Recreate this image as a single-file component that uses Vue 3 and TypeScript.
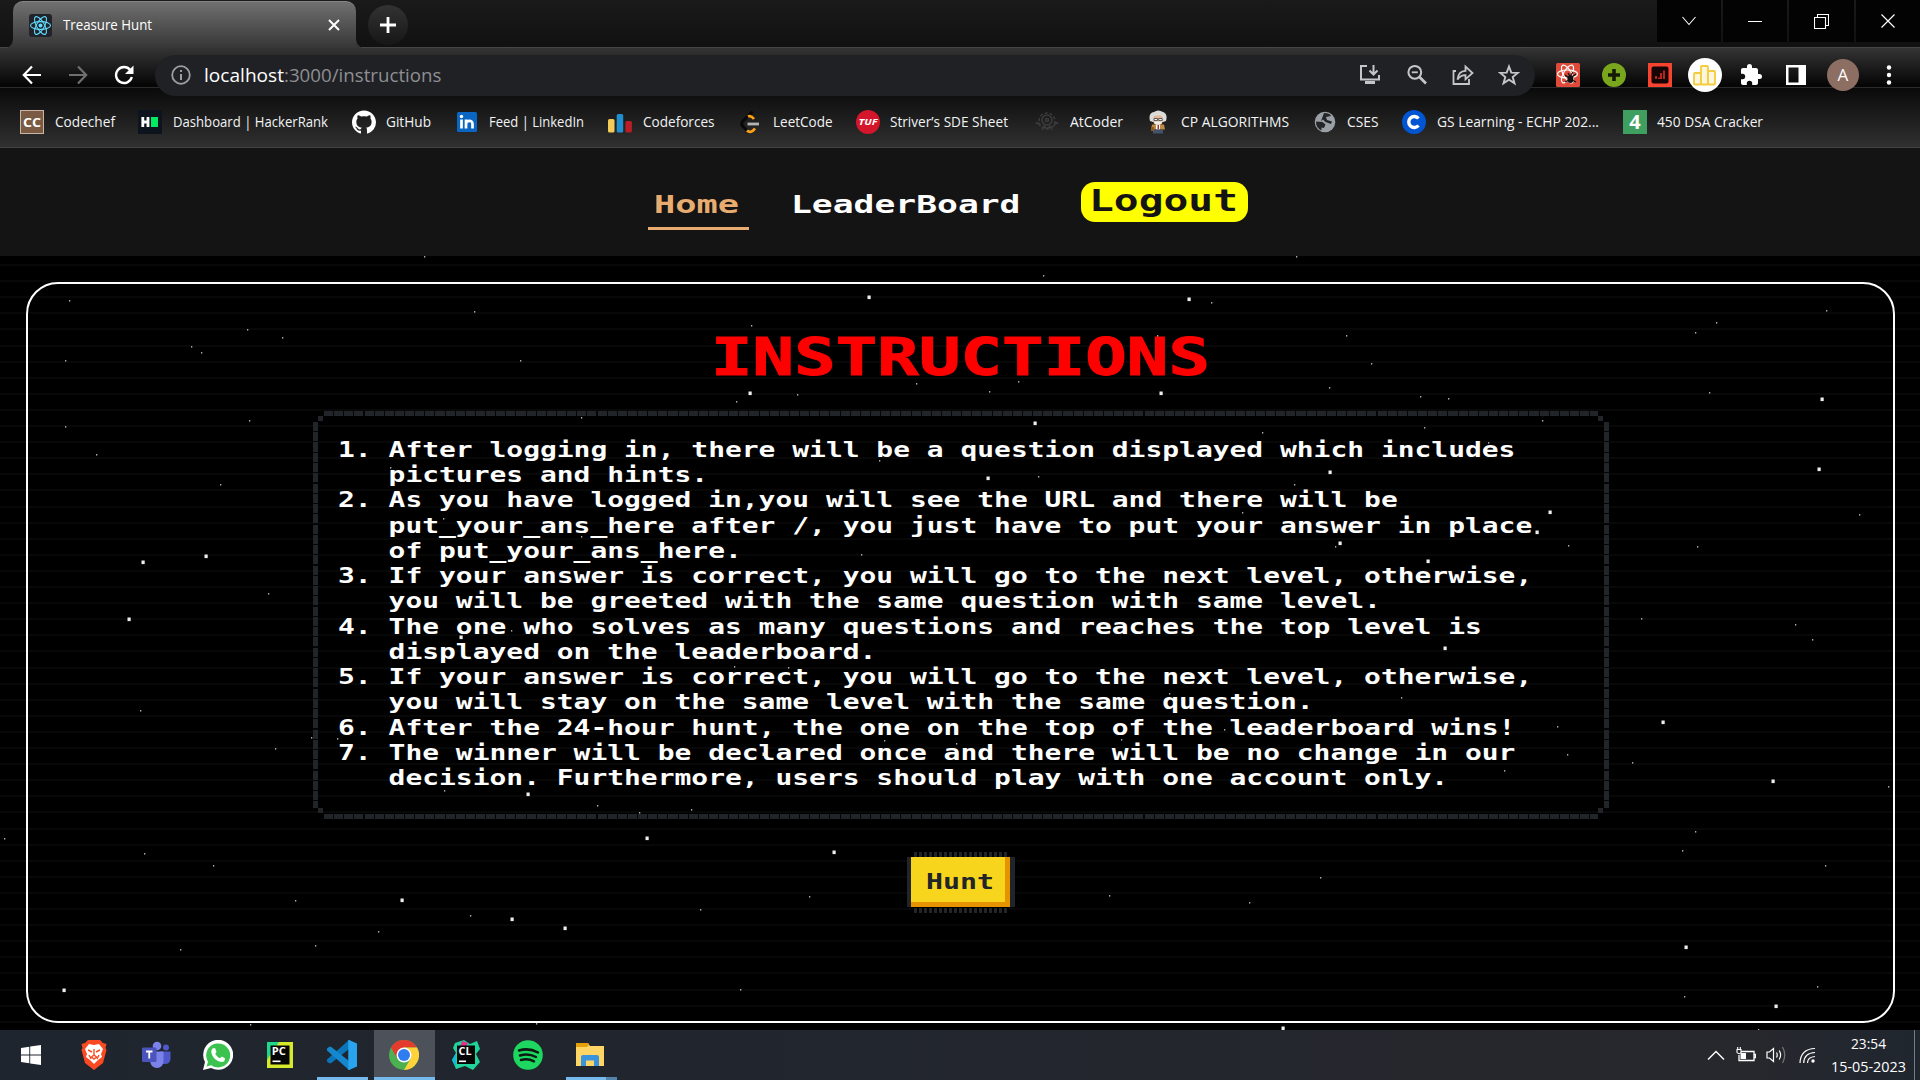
<script setup lang="ts">
import { defineComponent, h, onMounted, ref } from 'vue'

/* A single-line label stretched horizontally to an exact width. */
const Fit = defineComponent({
  props: { w: { type: Number, required: true }, text: { type: String, required: true } },
  setup(props) {
    const inner = ref<HTMLElement | null>(null)
    const scale = ref(1)
    onMounted(() => {
      if (inner.value) scale.value = props.w / inner.value.getBoundingClientRect().width
    })
    return () =>
      h('span', { class: 'fit', style: { width: props.w + 'px' } }, [
        h('span', { ref: inner, class: 'fit-text', style: { transform: `scaleX(${scale.value})` } }, props.text),
      ])
  },
})

interface Bookmark { icon: string; text: string; w: number }
const bookmarks: Bookmark[] = [
  { icon: 'cc', text: 'Codechef', w: 60 },
  { icon: 'hr', text: 'Dashboard | HackerRank', w: 155 },
  { icon: 'gh', text: 'GitHub', w: 45 },
  { icon: 'in', text: 'Feed | LinkedIn', w: 95 },
  { icon: 'cf', text: 'Codeforces', w: 71.5 },
  { icon: 'lc', text: 'LeetCode', w: 59.5 },
  { icon: 'tuf', text: 'Striver’s SDE Sheet', w: 118 },
  { icon: 'at', text: 'AtCoder', w: 53 },
  { icon: 'cp', text: 'CP ALGORITHMS', w: 108 },
  { icon: 'cs', text: 'CSES', w: 31.5 },
  { icon: 'gs', text: 'GS Learning - ECHP 202...', w: 162 },
  { icon: '450', text: '450 DSA Cracker', w: 106 },
]

const rules: string[][] = [
  ['After logging in, there will be a question displayed which includes', 'pictures and hints.'],
  ['As you have logged in,you will see the URL and there will be', 'put_your_ans_here after /, you just have to put your answer in place', 'of put_your_ans_here.'],
  ['If your answer is correct, you will go to the next level, otherwise,', 'you will be greeted with the same question with same level.'],
  ['The one who solves as many questions and reaches the top level is', 'displayed on the leaderboard.'],
  ['If your answer is correct, you will go to the next level, otherwise,', 'you will stay on the same level with the same question.'],
  ['After the 24-hour hunt, the one on the top of the leaderboard wins!'],
  ['The winner will be declared once and there will be no change in our', 'decision. Furthermore, users should play with one account only.'],
]

const bigStars: [number, number][] = [
  [869, 297], [1189, 299], [750, 393], [1161, 393], [1035, 423], [988, 478], [1330, 472], [1822, 399], [1550, 512],
  [1537, 532], [1340, 543], [1428, 561], [461, 637], [1445, 648], [1663, 722], [1773, 781], [528, 794], [647, 838],
  [834, 852], [402, 900], [512, 919], [565, 928], [1686, 947], [64, 990], [1776, 1006], [1283, 1028], [143, 562],
  [206, 556], [129, 619], [1819, 469], [764, 754],
]
const smallStars: [number, number][] = [
  [751, 325], [520, 360], [736, 401], [797, 394], [916, 383], [581, 417], [390, 467], [879, 460], [443, 518], [581, 536],
  [861, 554], [1157, 335], [1346, 335], [1371, 363], [1329, 387], [1420, 396], [1448, 398], [1018, 381], [989, 391],
  [1262, 432], [1424, 427], [1542, 420], [1488, 442], [1038, 476], [1294, 484], [1242, 512], [1568, 545], [1335, 546],
  [511, 630], [644, 658], [734, 666], [788, 667], [337, 738], [884, 740], [444, 790], [597, 805], [639, 812], [691, 809],
  [809, 896], [470, 915], [700, 909], [1169, 693], [1401, 697], [1224, 729], [1121, 739], [956, 743], [1557, 726],
  [1567, 754], [1504, 770], [1320, 877], [1109, 895], [1249, 902], [69, 300], [65, 360], [65, 426], [191, 346],
  [201, 352], [247, 329], [282, 337], [249, 420], [1684, 996], [1817, 986], [1758, 1029], [250, 1024], [536, 1023],
  [268, 593], [140, 710], [311, 737], [275, 748], [4, 838], [213, 865], [144, 853], [295, 900], [378, 931], [315, 945],
  [180, 949], [740, 989], [1043, 275], [1296, 256], [424, 256], [474, 311], [1695, 831], [1682, 850], [1825, 865],
  [1888, 786], [1632, 762], [1641, 618], [1795, 624], [1812, 639], [1697, 546], [1859, 514], [1716, 322], [1709, 392],
  [1695, 332], [1826, 310], [96, 454], [220, 484], [1211, 302],
]

const tasks = ['win', 'brave', 'teams', 'wa', 'pc', 'vs', 'chrome', 'cl', 'spot', 'files']
</script>

<template>
  <div class="screen">
    <header class="browser">
      <div class="strip">
        <div class="tab">
          <svg class="fav" width="23" height="23" viewBox="0 0 23 23">
            <rect width="23" height="23" rx="3" fill="#20232a" />
            <g fill="none" stroke="#61dafb" stroke-width="1.1">
              <ellipse cx="11.5" cy="11.5" rx="10" ry="3.9" transform="rotate(0 11.5 11.5)" />
              <ellipse cx="11.5" cy="11.5" rx="10" ry="3.9" transform="rotate(60 11.5 11.5)" />
              <ellipse cx="11.5" cy="11.5" rx="10" ry="3.9" transform="rotate(120 11.5 11.5)" />
            </g>
            <circle cx="11.5" cy="11.5" r="2" fill="#61dafb" />
          </svg>
          <Fit class="tab-title" :w="89" text="Treasure Hunt" />
          <svg class="tab-close" width="12" height="12" viewBox="0 0 12 12"><path d="M1 1 11 11M11 1 1 11" stroke="#fff" stroke-width="2" /></svg>
        </div>
        <div class="new-tab"><svg width="18" height="18" viewBox="0 0 18 18"><path d="M9 1V17M1 9H17" stroke="#fff" stroke-width="2.8" /></svg></div>
        <div class="caption">
          <span><svg width="16" height="12" viewBox="0 0 16 12"><path d="M1.5 2 8 9.5 14.5 2" fill="none" stroke="#fff" stroke-width="1.1" /></svg></span>
          <span><svg width="14" height="14" viewBox="0 0 14 14"><path d="M0 7.5H14" stroke="#fff" /></svg></span>
          <span><svg width="15" height="15" viewBox="0 0 15 15"><path d="M.5 3.5h11v11H.5zM3.500 3V.5h11v11H12" fill="none" stroke="#fff" stroke-width="1.1" /></svg></span>
          <span><svg width="14" height="14" viewBox="0 0 14 14"><path d="M.5 .5 13.500 13.500M13.500 .5 .5 13.500" stroke="#fff" stroke-width="1.2" /></svg></span>
        </div>
      </div>

      <div class="toolbar">
        <div class="nav-btns">
          <svg width="20" height="20" viewBox="0 0 20 20"><path d="M19 10H2M10 1.500 1.800 10 10 18.500" fill="none" stroke="#fff" stroke-width="2.2" /></svg>
          <svg width="20" height="20" viewBox="0 0 20 20"><path d="M1 10H18M10 1.500 18.200 10 10 18.500" fill="none" stroke="#6f6f6f" stroke-width="2.2" /></svg>
          <svg width="22" height="20" viewBox="0 0 22 20"><path d="M17.300 5A8 8 0 1 0 18.800 12" fill="none" stroke="#fff" stroke-width="2.4" /><path d="M20.500 .5V9H12z" fill="#fff" /></svg>
        </div>
        <div class="omnibox">
          <svg width="20" height="20" viewBox="0 0 20 20"><circle cx="10" cy="10" r="8.800" fill="none" stroke="#9aa0a6" stroke-width="1.8" /><path d="M10 9V15M10 5V7" stroke="#9aa0a6" stroke-width="2" /></svg>
          <span class="url"><Fit class="host" :w="80" text="localhost" /><Fit class="path" :w="157.500" text=":3000/instructions" /></span>
          <div class="omni-icons">
            <svg width="22" height="22" viewBox="0 0 22 22" fill="none" stroke="#c4c7ca" stroke-width="2"><path d="M8 2H2V15.500H20V11" /><path d="M14.500 1V10M10.500 6.500l4 4 4-4" /><path d="M6 18.500H16" stroke-width="3" /></svg>
            <svg width="22" height="22" viewBox="0 0 22 22" fill="none" stroke="#c4c7ca"><circle cx="8.800" cy="8.300" r="6.400" stroke-width="2" /><path d="M13.500 13 20 19.500" stroke-width="2.600" /><path d="M5.800 8.300H11.800" stroke-width="1.800" /></svg>
            <svg width="22" height="22" viewBox="0 0 22 22" fill="none" stroke="#c4c7ca" stroke-width="1.800"><path d="M4 7H1.500V20H17V15" /><path d="M5.500 15.500C6 10 9 7 13.500 6.800V2.500L20.500 9l-7 6.300V11.200C10 11.200 7.500 12.500 5.500 15.500z" /></svg>
            <svg width="22" height="22" viewBox="0 0 22 22"><path d="M11 2.500 13.300 8.600 19.800 8.900 14.700 13 16.500 19.300 11 15.700 5.500 19.300 7.300 13 2.200 8.900 8.700 8.600z" fill="none" stroke="#c4c7ca" stroke-width="1.900" /></svg>
          </div>
        </div>
        <div class="exts">
          <svg width="24" height="24" viewBox="0 0 24 24"><rect width="24" height="24" rx="1.500" fill="#e04a3a" /><g fill="none" stroke="#fff" stroke-width="1.200"><ellipse cx="11.500" cy="11" rx="10" ry="4" /><ellipse cx="11.500" cy="11" rx="10" ry="4" transform="rotate(60 11.500 11)" /><ellipse cx="11.500" cy="11" rx="10" ry="4" transform="rotate(120 11.500 11)" /></g><ellipse cx="14.500" cy="16" rx="3" ry="4" fill="#111" /><path d="M9 12l4 3M20 11l-4 3M9 19l4-2M20 19l-4-2M12 10l2 3M17 9l-2 3" stroke="#111" stroke-width="1.300" /></svg>
          <svg width="24" height="24" viewBox="0 0 24 24"><circle cx="12" cy="12" r="12" fill="#7aa61e" /><path d="M12 6V18M6 12H18" stroke="#141b05" stroke-width="3.600" /></svg>
          <svg width="24" height="24" viewBox="0 0 24 24"><rect width="24" height="24" fill="#f8432f" /><rect x="3.500" y="3.500" width="17" height="17" rx="2" fill="#160504" /><path d="M8 16V13M11 16V14.500M13 16V10M16 16V7.500" stroke="#e02c20" stroke-width="1.600" /></svg>
          <svg width="34" height="34" viewBox="0 0 34 34"><circle cx="17" cy="17" r="17" fill="#fff" /><g fill="#fdf6dc" stroke="#f3cc3c" stroke-width="1.800"><rect x="6" y="15" width="7" height="11.500" rx="1" /><rect x="13" y="8" width="7" height="18.500" rx="1" /><rect x="20" y="13" width="7" height="13.500" rx="1" /></g></svg>
          <svg width="24" height="24" viewBox="0 0 24 24"><path d="M20.500 11H19V7c0-1.100-.9-2-2-2h-4V3.500a2.500 2.500 0 0 0-5 0V5H4c-1.100 0-2 .9-2 2v3.800h1.500a2.700 2.700 0 0 1 0 5.400H2V20c0 1.100.9 2 2 2h3.800v-1.500a2.700 2.700 0 0 1 5.400 0V22H17c1.100 0 2-.9 2-2v-4h1.500a2.500 2.500 0 0 0 0-5z" fill="#fff" /></svg>
          <svg width="20" height="20" viewBox="0 0 20 20"><path d="M0 0H20V20H0zM2.500 2.500V17.500H12.500V2.500z" fill="#fff" fill-rule="evenodd" /></svg>
          <span class="avatar">A</span>
          <svg width="6" height="20" viewBox="0 0 6 20" fill="#fff"><circle cx="3" cy="2.500" r="2.200" /><circle cx="3" cy="10" r="2.200" /><circle cx="3" cy="17.500" r="2.200" /></svg>
        </div>
      </div>

      <nav class="bookmarks">
        <div v-for="b in bookmarks" :key="b.text" class="bm" :class="'bm-' + b.icon">
          <svg width="24" height="24" viewBox="0 0 24 24">
            <g v-if="b.icon === 'cc'"><rect x=".5" y=".5" width="23" height="23" fill="#7b5a43" stroke="#c9b5a5" /><text x="12" y="16.500" class="glyph" font-size="13" fill="#fff" textLength="18" lengthAdjust="spacingAndGlyphs">CC</text></g>
            <g v-else-if="b.icon === 'hr'"><rect width="24" height="24" fill="#0e141e" /><path d="M4.800 7V17M10 7V17M5 12H10" stroke="#fff" stroke-width="2.800" /><rect x="13" y="7" width="7" height="10" fill="#00ea64" /></g>
            <path v-else-if="b.icon === 'gh'" fill="#fff" d="M12 .5C5.370.5 0 5.780 0 12.300c0 5.200 3.440 9.600 8.200 11.200.6.100.8-.25.8-.57v-2.200c-3.340.7-4.040-1.400-4.040-1.400-.55-1.370-1.330-1.740-1.330-1.740-1.100-.73.080-.72.080-.72 1.200.08 1.840 1.220 1.840 1.220 1.070 1.800 2.800 1.280 3.490.98.100-.76.420-1.280.76-1.570-2.670-.3-5.470-1.310-5.470-5.830 0-1.290.47-2.340 1.240-3.170-.13-.3-.54-1.500.1-3.120 0 0 1.010-.32 3.300 1.200a11.700 11.700 0 0 1 6 0c2.300-1.520 3.300-1.200 3.300-1.200.65 1.620.24 2.820.12 3.120.77.83 1.230 1.880 1.230 3.170 0 4.530-2.800 5.530-5.480 5.820.43.360.82 1.080.82 2.180v3.240c0 .32.200.69.800.57A11.800 11.800 0 0 0 24 12.300C24 5.780 18.630.5 12 .5z" />
            <g v-else-if="b.icon === 'in'"><rect x="2" y="2" width="20" height="20" rx="1.500" fill="#0a66c2" /><circle cx="6.500" cy="6.500" r="1.700" fill="#fff" /><path d="M6.500 9.500V18.500M11 9.500V18.500M11 14C11 10 17.500 9.500 17.500 14V18.500" fill="none" stroke="#fff" stroke-width="2.700" /></g>
            <g v-else-if="b.icon === 'cf'"><rect x="0" y="9" width="6.500" height="13.500" rx="1.500" fill="#f4cb58" /><rect x="8.700" y="4" width="6.500" height="18.500" rx="1.500" fill="#1f8fd0" /><rect x="17.400" y="11" width="6.500" height="11.500" rx="1.500" fill="#b81e25" /></g>
            <g v-else-if="b.icon === 'lc'" fill="none" stroke-width="2.800"><path d="M14.500 1.500 4.500 11.500Q2.500 14 5 16.500L9 20.500" stroke="#080808" /><path d="M10 6.500Q13 5 16 9M9 20.500Q13 24 17 18.500" stroke="#ffa116" /><path d="M9.500 14H21" stroke="#b3b3b3" /></g>
            <g v-else-if="b.icon === 'tuf'"><circle cx="12" cy="12" r="12" fill="#d3162b" /><text x="12" y="15.300" class="glyph" font-style="italic" font-size="9" fill="#fff" textLength="19" lengthAdjust="spacingAndGlyphs">TUF</text></g>
            <g v-else-if="b.icon === 'at'" fill="none" stroke="#3c3c3c" stroke-width="1.500"><circle cx="12" cy="10" r="5" /><circle cx="12" cy="11" r="8" stroke-dasharray="3 2" /><path d="M1 14q2-3 4 2M23 14q-2-3-4 2M7 20l2-4 3 3 3-3 2 4" /><circle cx="12" cy="10" r="1.500" /></g>
            <g v-else-if="b.icon === 'cp'"><path d="M4 11Q2 3 8 2 12-1 17 2 22 4 20 11l-3 1H7z" fill="#dcdcd8" /><rect x="7.500" y="5.500" width="9" height="9" rx="3" fill="#e3b794" /><path d="M8 8.500h3.500v2H8zM12.700 8.500h3.500v2h-3.500z" fill="#eee" stroke="#444" stroke-width=".8" /><path d="M8 11.500h8l-1 3H9z" fill="#eee" /><path d="M6 14.500h12l1 5H5z" fill="#bf8c43" /><path d="M10 14.500h4v5h-4z" fill="#fff" /><path d="M11.500 15h1.500v4h-1.500z" fill="#a33" /><path d="M7 19.500h10v4H7z" fill="#44516b" /><path d="M5 17h3v4H5z" fill="#8a5c22" /></g>
            <g v-else-if="b.icon === 'cs'"><circle cx="12" cy="12" r="10.300" fill="#9aa0a6" /><path d="M11 3Q17 3 18 6L13 7 14 10 19 11.500 18 14 12.500 12 10 9.500 8 11z" fill="#24262a" /><path d="M3 11.500 9.500 12 12.500 14.500 11 18 8.500 17.500V20.500Q3 18 3 11.500z" fill="#24262a" /></g>
            <g v-else-if="b.icon === 'gs'"><circle cx="12" cy="12" r="12" fill="#0056d2" /><path d="M16.500 8.500A5.500 5.500 0 1 0 16.500 15.500" fill="none" stroke="#fff" stroke-width="3.400" /></g>
            <g v-else><rect width="24" height="24" fill="#3f9f61" /><text x="12" y="19" class="glyph" font-size="20" fill="#fff">4</text></g>
          </svg>
          <Fit class="bm-label" :w="b.w" :text="b.text" />
        </div>
      </nav>
    </header>

    <section class="page">
      <div class="site-nav">
        <a class="home"><Fit :w="85" text="Home" /></a>
        <a class="board"><Fit :w="229.500" text="LeaderBoard" /></a>
        <a class="logout"><Fit :w="149" text="Logout" /></a>
      </div>
      <main class="space">
        <svg class="stars" width="1920" height="774" viewBox="0 256 1920 774">
          <rect v-for="([x, y], i) in smallStars" :key="'s' + i" :x="x" :y="y" width="1.300" height="1.600" fill="#aaa" />
          <rect v-for="([x, y], i) in bigStars" :key="'b' + i" :x="x - 1.500" :y="y - 1.500" width="3.200" height="3.600" fill="#eee" />
        </svg>
        <div class="frame">
          <h1><Fit :w="499" text="INSTRUCTIONS" /></h1>
          <div class="rules-box">
            <i class="edge top"></i><i class="edge bottom"></i><i class="edge left"></i><i class="edge right"></i>
            <i class="dot tl"></i><i class="dot tr"></i><i class="dot bl"></i><i class="dot br"></i>
            <ol class="rules">
              <li v-for="(r, i) in rules" :key="i">
                <span class="num">{{ i + 1 }}.</span>
                <div><p v-for="line in r" :key="line">{{ line }}</p></div>
              </li>
            </ol>
          </div>
          <button class="hunt"><Fit :w="68" text="Hunt" /></button>
        </div>
      </main>
    </section>

    <footer class="taskbar">
      <div class="tasks">
        <div v-for="t in tasks" :key="t" class="task" :class="'t-' + t">
          <svg width="30" height="30" viewBox="0 0 30 30">
            <path v-if="t === 'win'" fill="#fff" d="M5 8 13.300 6.700V14.500H5zM14.200 6.500 25 5V14.500H14.200zM5 15.400H13.300V23.300L5 22zM14.200 15.400H25V25L14.200 23.500z" />
            <g v-else-if="t === 'brave'"><path d="M9 0H21L24 3 27.500 4 26.500 8 27.500 10 24 23 15 30 6 23 2.500 10 3.500 8 2.500 4 6 3z" fill="#fb4a22" /><path d="M15 5 20 4 24 9 22 14 23 17 19 20 15 24 11 20 7 17 8 14 6 9 10 4z" fill="#fff" /><path d="M9 10 13 12M21 10 17 12M15 9V15L12.500 17 15 19 17.500 17 15 15M10 15 12 19M20 15 18 19" fill="none" stroke="#fb4a22" stroke-width="1.400" /></g>
            <g v-else-if="t === 'teams'"><circle cx="16" cy="6" r="4.300" fill="#7b83eb" /><circle cx="25" cy="7.500" r="3" fill="#5059c9" /><path d="M19 11.500H29.500V19Q29 24 24 24H19z" fill="#5059c9" /><path d="M9 11.500H22.500V21Q22 28 16 28T9 21z" fill="#7b83eb" /><rect x="1" y="7.500" width="14.500" height="14.500" rx="1.300" fill="#4b53bc" /><path d="M5 11.500H11.500M8.250 11.500V18.500" stroke="#fff" stroke-width="1.800" /></g>
            <g v-else-if="t === 'wa'"><path d="M0 30 2 22A15 15 0 1 1 8 28z" fill="#fff" /><path d="M3.500 26.500 5 21.700A12 12 0 1 1 8.300 25.200z" fill="#3cc24f" /><path d="M9.500 8.500 12 8 13.500 12 12.200 14Q14 17 17 18.200L18.800 16.500 22 18.200Q22 22.500 18 22 10 20 8.300 12.500 8 10 9.500 8.500z" fill="#fff" /></g>
            <g v-else-if="t === 'pc'"><rect x="2" y="2" width="26" height="26" fill="#d7e92b" /><path d="M2 2H14L2 20z" fill="#21d789" /><rect x="5.500" y="5.500" width="19" height="19" fill="#060606" /><text x="13.800" y="14.500" class="glyph" font-size="10" fill="#fff" textLength="14" lengthAdjust="spacingAndGlyphs">PC</text><rect x="7.500" y="20.500" width="8" height="1.600" fill="#fff" /></g>
            <g v-else-if="t === 'vs'"><path d="M22 0 30 3.500V26.500L22 30z" fill="#29a3ee" /><path d="M22 0 0 19.500V21.500L2.300 23.300 4 23.200 22 9z" fill="#0b75ba" /><path d="M22 30 0 10.500V8.500L2.300 6.700 4 6.800 22 21z" fill="#1587cf" /><path d="M22 0V30" stroke="#29a3ee" stroke-width="1.500" /></g>
            <g v-else-if="t === 'chrome'"><circle cx="15" cy="15" r="15" fill="#4caf50" /><path d="M2 7.500A15 15 0 0 1 28 7.500H15L8.500 18.800z" fill="#e33b2e" /><path d="M28 7.500A15 15 0 0 1 15 30L21.500 18.800 15 7.500z" fill="#fdd23a" /><circle cx="15" cy="15" r="7.500" fill="#fff" /><circle cx="15" cy="15" r="6" fill="#2f7df0" /></g>
            <g v-else-if="t === 'cl'"><path d="M4 3 13 0 19 4 26 1 29 9 25 14 29 22 22 30 14 26 5 29 1 20 5 13 2 8z" fill="#1fd39b" /><path d="M1 20 5 13V27z" fill="#15b9d8" /><path d="M11 1 17 3 15 7H9z" fill="#e6318a" /><rect x="6" y="5.500" width="18" height="18.500" fill="#060606" /><text x="14" y="15" class="glyph" font-size="10" fill="#fff" textLength="13" lengthAdjust="spacingAndGlyphs">CL</text><rect x="8" y="20.500" width="7" height="1.600" fill="#fff" /></g>
            <g v-else-if="t === 'spot'"><circle cx="15" cy="15" r="14.800" fill="#1ed760" /><path d="M6 10.500Q16 7.500 25 12.500M7 15.500Q15.500 13 23 17M8 20Q15 18 21 21.300" fill="none" stroke="#0c1a12" stroke-width="2.500" stroke-linecap="round" /></g>
            <g v-else><path d="M1 3H13L15 6H29V26H1z" fill="#ffd566" /><path d="M1 3H13L14 5 12 7H1z" fill="#e3a008" /><path d="M6 26V17Q6 15 8 15H22Q24 15 24 17V26H19V20.500H11V26z" fill="#3a94dd" /></g>
          </svg>
        </div>
      </div>
      <div class="tray">
        <svg width="18" height="11" viewBox="0 0 18 11"><path d="M1 9.500 9 1.500 17 9.500" fill="none" stroke="#fff" stroke-width="1.400" /></svg>
        <svg width="20" height="16" viewBox="0 0 20 16"><path d="M5 4.500H18V13.500H3V8M18 7.500H19.500V10.500H18" fill="none" stroke="#fff" stroke-width="1.300" /><path d="M4.500 6H10V12H4.500z" fill="#fff" /><path d="M1 2.500H5V5.500Q3 8 1 5.500zM1.700 0V2.500M4.300 0V2.500" fill="#23262b" stroke="#fff" stroke-width="1.100" /></svg>
        <svg width="21" height="18" viewBox="0 0 21 18" fill="none" stroke="#fff" stroke-width="1.200"><path d="M1 6H3.500L7.500 2.500V15.500L3.500 12H1z" /><path d="M10.500 6.500Q12 9 10.500 11.500M13.200 4.500Q16 9 13.200 13.500" /><path d="M16.500 1Q21 9 16.500 17" stroke="#777" /></svg>
        <svg width="17" height="17" viewBox="0 0 17 17" fill="none" stroke="#fff" stroke-width="1.200"><path d="M1 16Q1.500 2 16 1.500M4.700 16Q5 6 16 5.500M8.500 16Q8.500 10 16 9.500" /><circle cx="14" cy="14" r="1.700" fill="#fff" stroke="none" /></svg>
        <div class="clock"><Fit :w="35" text="23:54" /><Fit :w="75" text="15-05-2023" /></div>
        <i class="peek"></i>
      </div>
    </footer>
  </div>
</template>

<style>
body { margin: 0; background: #000; overflow: hidden; }
.fit { display: block; flex: none; white-space: nowrap; }
.fit-text { display: inline-block; transform-origin: 0 50%; }
</style>

<style scoped>
* { box-sizing: border-box; }
svg { display: block; flex: none; }
.screen { width: 1920px; height: 1080px; display: flex; flex-direction: column; overflow: hidden; background: #000; font-family: "Open Sans", "Noto Sans", sans-serif; color: #fff; }
.glyph { font-family: "Open Sans", sans-serif; font-weight: 700; text-anchor: middle; }

.browser { height: 148px; flex: none; background: #151515; }
.strip { height: 48px; display: flex; align-items: flex-start; padding-left: 13px; background: linear-gradient(#1a1a1a, #111); border-bottom: 1px solid #464646; }
.tab { position: relative; width: 343px; height: 48px; margin-top: 1px; display: flex; align-items: center; padding: 0 16px 1px; border-radius: 10px 10px 0 0; background: linear-gradient(#707070, #353535); border-top: 1px solid #858585; }
.tab::before, .tab::after { content: ""; position: absolute; bottom: 0; width: 10px; height: 10px; }
.tab::before { left: -10px; background: radial-gradient(circle at 0 0, transparent 9.500px, #363636 10px); }
.tab::after { right: -10px; background: radial-gradient(circle at 100% 0, transparent 9.500px, #363636 10px); }
.tab-title { margin-left: 11px; font-size: 14.500px; line-height: 20px; }
.tab-close { margin-left: auto; }
.new-tab { width: 40px; height: 40px; margin: 5px 0 0 12px; border-radius: 50%; display: flex; align-items: center; justify-content: center; background: linear-gradient(#333, #161616); }
.caption { margin-left: auto; display: flex; gap: 2px; height: 42px; }
.caption span { width: 64.300px; background: #030303; display: flex; align-items: center; justify-content: center; }

.toolbar { position: relative; z-index: 1; height: 40px; display: flex; align-items: center; padding-top: 15px; background: linear-gradient(#343434, #060606 95%); border-bottom: 1px solid #2b2b2b; }
.nav-btns { width: 155px; flex: none; padding-left: 22px; display: flex; gap: 25.500px; align-items: center; }
.omnibox { width: 1380px; height: 41px; flex: none; border-radius: 21px; background: #202125; display: flex; align-items: center; padding: 0 15px 0 16px; }
.url { display: flex; margin-left: 13px; font-size: 19px; line-height: 26px; }
.host { color: #fff; }
.path { color: #8d8f92; }
.omni-icons { display: flex; gap: 24.200px; margin-left: auto; }
.exts { flex: 1; display: flex; align-items: center; padding-left: 20.500px; }
.exts > :nth-child(2), .exts > :nth-child(3) { margin-left: 22.200px; }
.exts > :nth-child(4) { margin-left: 16.500px; }
.exts > :nth-child(5) { margin-left: 17px; }
.exts > :nth-child(6) { margin-left: 23px; }
.exts > :nth-child(8) { margin-left: 27px; }
.avatar { width: 32px; height: 32px; margin-left: 20.500px; flex: none; border-radius: 50%; background: #8d6e63; font-size: 17px; line-height: 32px; text-align: center; }

.bookmarks { height: 60px; display: flex; align-items: center; gap: 23.700px; padding: 8px 0 0 20px; background: linear-gradient(#0a0a0a, #303030); border-bottom: 1px solid #424242; }
.bm { display: flex; align-items: center; gap: 10.600px; flex: none; }
.bm-at { margin-left: 3px; }
.bm-label { font-size: 14px; line-height: 20px; color: #f1f3f4; padding-top: 1px; }

.page { height: 882px; flex: none; display: flex; flex-direction: column; font-family: "DejaVu Sans Mono", "Liberation Mono", monospace; font-weight: 700; }
.site-nav { height: 108px; flex: none; background: #141414; display: flex; align-items: flex-start; padding-left: 648px; }
.site-nav a { display: block; white-space: nowrap; }
.home { width: 101px; height: 52px; margin-top: 30px; padding: 12px 0 0 6px; font-size: 25px; line-height: 30px; color: #e9ac70; border-bottom: 3px solid #e9ac70; }
.board { margin: 42px 0 0 42px; font-size: 25px; line-height: 30px; }
.logout { width: 167px; height: 40px; margin: 34px 0 0 60px; padding-left: 8px; border-radius: 14px; background: #ff0; color: #141414; font-size: 30px; line-height: 37px; }

.space { position: relative; height: 774px; padding: 26px; background: repeating-linear-gradient(#000 0 8px, #080808 8px 10px, #000 10px 16.100px); }
.stars { position: absolute; left: 0; top: 0; z-index: 2; }
.frame { position: relative; width: 1869px; height: 741px; border: 2px solid #fff; border-radius: 32px; display: flex; flex-direction: column; align-items: flex-start; }
h1 { margin: 39px 0 0 683px; font-size: 52px; line-height: 68px; color: #f00; -webkit-text-stroke: 1px #f00; }
.rules-box { position: relative; width: 1296px; height: 408px; margin: 20px 0 0 285px; padding-top: 27px; }
.edge, .dot { position: absolute; }
.top, .bottom { left: 11px; right: 11px; height: 5px; background: repeating-linear-gradient(90deg, #212529 0 9.100px, #050505 9.100px 10.130px); }
.top { top: 0; }
.bottom { bottom: 0; }
.left, .right { top: 11px; bottom: 11px; width: 5px; background: repeating-linear-gradient(#212529 0 9.200px, #050505 9.200px 10.250px); }
.left { left: 0; }
.right { right: 0; }
.dot { width: 5px; height: 5px; background: #212529; }
.tl { left: 5px; top: 5px; }
.tr { right: 6px; top: 5px; }
.bl { left: 5px; bottom: 6px; }
.br { right: 6px; bottom: 6px; }
.rules { list-style: none; margin: 0 0 0 25px; padding: 0; width: 900px; font-size: 20.600px; line-height: 25.230px; transform: scaleX(1.3565); transform-origin: 0 0; }
.rules li { display: flex; white-space: pre; }
.num { width: 37.300px; flex: none; }
.rules p { margin: 0; }
.hunt { position: relative; width: 99px; height: 50px; margin: 38px 0 0 883px; padding: 0 0 0 15px; border: 0; background: #f7d51d; box-shadow: inset -5px -5px #e59400, -4px 0 #212529, 5px 0 #212529; color: #212529; font: 700 20.600px/43px "DejaVu Sans Mono", monospace; text-align: left; }
.hunt::before, .hunt::after { content: ""; position: absolute; left: 3px; right: 1px; height: 5px; background: repeating-linear-gradient(90deg, #212529 0 3px, #000 3px 5px); }
.hunt::before { top: -5px; }
.hunt::after { bottom: -6px; }

.taskbar { height: 50px; flex: none; display: flex; justify-content: space-between; background: linear-gradient(90deg, #1f252e, #23262d 60%, #27282d 90%, #20262f); }
.tasks { display: flex; }
.task { position: relative; width: 62.100px; height: 50px; display: flex; align-items: center; justify-content: center; flex: none; }
.t-win svg { margin-right: 2px; }
.t-chrome { background: linear-gradient(#4d525a, #4d525a) 1px 0 / 61px 50px no-repeat; }
.t-vs::after, .t-chrome::after, .t-files::after { content: ""; position: absolute; bottom: 0; left: 7px; width: 51px; height: 3px; background: #76b9ed; }
.t-chrome::after { left: 1px; width: 61px; }
.t-files::after { background: linear-gradient(90deg, #76b9ed 40px, #5584ab 40px); }
.task svg { position: relative; left: .6px; }
.tray { display: flex; align-items: center; font-weight: 400; }
.tray > svg:nth-child(2) { margin-left: 11px; }
.tray > svg:nth-child(3) { margin-left: 10px; }
.tray > svg:nth-child(4) { margin-left: 12px; }
.clock { width: 75px; margin: 0 8px 0 15px; display: flex; flex-direction: column; align-items: center; font-size: 15px; line-height: 23px; }
.peek { width: 1px; height: 50px; margin-right: 5px; background: #777b80; }
</style>
